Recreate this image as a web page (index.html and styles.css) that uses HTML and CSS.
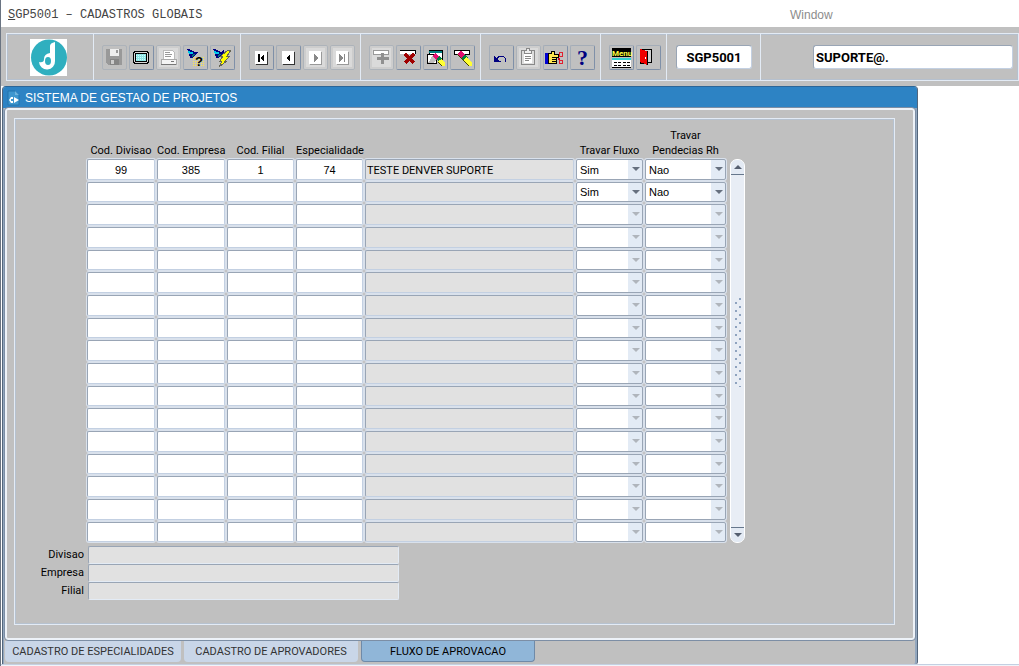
FILE: index.html
```html
<!DOCTYPE html>
<html lang="pt-BR">
<head>
    <meta charset="UTF-8">
    <title>SGP5001 - Cadastros Globais</title>
    <link rel="stylesheet" href="styles.css">
</head>
<body>
    <nav class="menubar">
        <a class="menu-main" href="#"><u>S</u>GP5001 – CADASTROS GLOBAIS</a>
        <a class="menu-window" href="#">Window</a>
    </nav>

    <div class="toolbar-area">
        <div class="toolbar">
            <div class="tool-logo">
                <svg width="37" height="37" viewBox="0 0 37 37">
                    <rect width="37" height="37" fill="#fff"/>
                    <circle cx="19" cy="18.500" r="18" fill="#2fafbf"/>
                    <path d="M20 7Q20 4 25 3V22A8 8 0 0 1 9 23Q14 24 14 20Q14 15 20 14Z" fill="#fff"/>
                    <ellipse cx="18" cy="22" rx="3" ry="4" fill="#2fafbf"/>
                </svg>
            </div>

            <!-- arquivo -->
            <div class="tool-group">
                <button class="tool-btn" disabled aria-label="Salvar">
                    <svg viewBox="0 0 23 23"><path d="M3 3H19V19H5L3 17Z" fill="#999"/><path d="M7 3H16V10H7Z" fill="#eee"/><path d="M13 4H15V7H13Z" fill="#999"/><path d="M7 13H16V19H7Z" fill="#858585"/><path d="M8 14H11V18H8Z" fill="#ccc"/></svg>
                </button>
                <button class="tool-btn" aria-label="Tela">
                    <svg viewBox="0 0 23 23"><path d="M4 5H18V6H19V17H18V18H4V17H3V6H4Z" fill="#000"/><path d="M5 6H17V7H18V16H17V17H5V16H4V7H5Z" fill="#d8d8d8"/><path d="M5 7H17V16H5Z" fill="#000"/><path d="M6 8H16V15H6Z" fill="#8fe5e5"/><path d="M6 9.500H16M6 11.500H16M6 13.500H16" stroke="#c9ffff" stroke-dasharray="1 1"/></svg>
                </button>
                <button class="tool-btn off" disabled aria-label="Imprimir">
                    <svg viewBox="0 0 23 23"><path d="M6 4H15L17 6V13H6Z" fill="#fff" stroke="#bbb"/><path d="M8 6.500H13M8 8.500H15M8 10.500H14" stroke="#999"/><path d="M4 13H19V18H4Z" fill="#f4f4f4" stroke="#aaa"/><path d="M4 18.500H19M14 15.500H17" stroke="#777"/></svg>
                </button>
                <button class="tool-btn" aria-label="Consultar">
                    <svg viewBox="0 0 23 23"><path d="M9 11.500H21M9 13.500H21M9 15.500H21M9 17.500H21M9 19.500H21" stroke="#ffe94a" stroke-dasharray="1 1"/><path d="M3 3H5L11 6H14V7L8 12H6L5 8Z" fill="#000080"/><path d="M4 5L8 6L10 7L7 8H5Z" fill="#00c8e8"/><path d="M9 8H12L8 11Z" fill="#007878"/><text x="11" y="20" class="icon-query">?</text></svg>
                </button>
                <button class="tool-btn" aria-label="Executar consulta">
                    <svg viewBox="0 0 23 23"><path d="M2 3H4L10 6L13 3V6L7 12H5L4 8Z" fill="#000080"/><path d="M3 5L7 6L9 7L6 8H4Z" fill="#00c8e8"/><path d="M8 8H11L7 11Z" fill="#007878"/><path d="M17 4H20L16 10H19L14 15H16L8 21L11 15H9L12 10H10Z" fill="#ffff00" stroke="#665" stroke-width="1"/></svg>
                </button>
            </div>

            <!-- navegação -->
            <div class="tool-group">
                <button class="tool-btn" aria-label="Primeiro">
                    <svg viewBox="0 0 23 23"><path d="M6 6H18V19H6Z" fill="#333"/><path d="M5 5H17V18H5Z" fill="#fff"/><path d="M8 8H10V16H8ZM14 8V16L10 12Z" fill="#000"/></svg>
                </button>
                <button class="tool-btn" aria-label="Anterior">
                    <svg viewBox="0 0 23 23"><path d="M6 6H18V19H6Z" fill="#333"/><path d="M5 5H17V18H5Z" fill="#fff"/><path d="M13 8V16L9 12Z" fill="#000"/></svg>
                </button>
                <button class="tool-btn off" disabled aria-label="Próximo">
                    <svg viewBox="0 0 23 23"><path d="M6 6H18V19H6Z" fill="#999"/><path d="M5 5H17V18H5Z" fill="#fff"/><path d="M10 8V16L14 12Z" fill="#888"/></svg>
                </button>
                <button class="tool-btn off" disabled aria-label="Último">
                    <svg viewBox="0 0 23 23"><path d="M6 6H18V19H6Z" fill="#999"/><path d="M5 5H17V18H5Z" fill="#fff"/><path d="M8 8V16L12 12ZM13 8H14V16H13Z" fill="#888"/></svg>
                </button>
            </div>

            <!-- registros -->
            <div class="tool-group">
                <button class="tool-btn off" disabled aria-label="Inserir">
                    <svg viewBox="0 0 23 23"><path d="M3.500 4.500H18.500V8.500H3.500Z" fill="#fff" stroke="#999"/><path d="M11 7H14V11H19V14H14V18H11V14H7V11H11Z" fill="#909090"/></svg>
                </button>
                <button class="tool-btn" aria-label="Excluir">
                    <svg viewBox="0 0 23 23"><path d="M3 4H19V8H3Z" fill="#fff"/><path d="M3 4.500H18.500V8" fill="none" stroke="#000"/><path d="M8 8L17 17M17 8L8 17" stroke="#a00000" stroke-width="3"/></svg>
                </button>
                <button class="tool-btn" aria-label="Limpar bloco">
                    <svg viewBox="0 0 23 23"><path d="M5 4.500H18.500V13.500H5Z" fill="#fff" stroke="#000"/><path d="M5 6H18" stroke="#008080" stroke-width="2"/><path d="M3.500 8.500H12.500V17.500H3.500Z" fill="#fff" stroke="#000"/><path d="M4 17L9 9L12 14L9 17Z" fill="#c0c0c0"/><path d="M8 10L12 7L15 11L12 14Z" fill="#e01070"/><path d="M12 13L15 10L18 13L15 16Z" fill="#008040"/><path d="M14 15L18 13L21 17V20H18Z" fill="#ff3"/><path d="M14 16L18 20" stroke="#440"/></svg>
                </button>
                <button class="tool-btn" aria-label="Limpar registro">
                    <svg viewBox="0 0 23 23"><path d="M3.500 4.500H18.500V8.500H3.500Z" fill="#fff" stroke="#000"/><path d="M6 8L10 5L14 9L11 12Z" fill="#e01070"/><path d="M10 12L14 8L17 12L13 15Z" fill="#008040"/><path d="M12 14L16 11L21 17V20H18Z" fill="#ff3"/><path d="M6 8L18 20" stroke="#440"/></svg>
                </button>
            </div>

            <!-- edição -->
            <div class="tool-group">
                <button class="tool-btn" aria-label="Desfazer">
                    <svg viewBox="0 0 23 23"><path d="M4 9V16H11V15H9L7 13L9 11H13L15 13V16H16V12L13 10H9L6 12Z" fill="#000080"/></svg>
                </button>
                <button class="tool-btn off" disabled aria-label="Lista de valores">
                    <svg viewBox="0 0 23 23"><path d="M4.500 4.500H17.500V18.500H4.500Z" fill="#ddd" stroke="#888"/><path d="M7 7H15V17H7Z" fill="#fff"/><path d="M7.500 6V4.500H9.500V2.500H12.500V4.500H14.500V7.500H7.500Z" fill="#eee" stroke="#888"/><path d="M8 10.500H14M8 12.500H14M8 14.500H12" stroke="#888"/></svg>
                </button>
                <button class="tool-btn" aria-label="Editar">
                    <svg viewBox="0 0 23 23"><path d="M1 7H4V18H1Z" fill="#0000d0"/><path d="M4.500 7.500H7L8 5.500H10.500V8.500H14.500V11.500H12.500V17.500H5L4.500 16Z" fill="#ffe650" stroke="#000"/><path d="M8 11.500H12M8 13.500H12M8 15.500H12" stroke="#000"/><path d="M14 12.500H16" stroke="#d00020" stroke-width="2"/><path d="M15.500 6.500H18.500V10.500H15.500ZM15.500 14.500H18.500V17.500H15.500Z" fill="none" stroke="#e02030"/></svg>
                </button>
                <button class="tool-btn" aria-label="Ajuda">
                    <svg viewBox="0 0 23 23"><text x="6" y="19" class="icon-help">?</text></svg>
                </button>
            </div>

            <!-- menu / sair -->
            <div class="tool-group">
                <button class="tool-btn" aria-label="Menu">
                    <svg viewBox="0 0 23 23"><path d="M2 2H21V11H2Z" fill="#000"/><text x="2" y="10" class="icon-menu">Menu</text><path d="M2 12H21V21H2Z" fill="#fff"/><path d="M2 12H21V14H2Z" fill="#30d0d0"/><path d="M4 16.500H11M4 19.500H11M13 16.500H20M13 19.500H20" stroke="#000" stroke-dasharray="3 1"/><path d="M2 21.500H21" stroke="#000"/></svg>
                </button>
                <button class="tool-btn" aria-label="Sair">
                    <svg viewBox="0 0 23 23"><path d="M3.500 3.500H14.500V16.500H3.500Z" fill="#d0d0d0" stroke="#000"/><path d="M3 3L10 5V19L3 16Z" fill="#f00000"/><path d="M10.500 5V19M3 17.500H7" stroke="#000"/><path d="M8 11H9V13H8Z" fill="#fff"/></svg>
                </button>
            </div>

            <div class="tool-field">
                <input class="program-code" type="text" value="SGP5001" aria-label="Programa">
            </div>
            <div class="tool-field tool-user">
                <input class="user-name" type="text" value="SUPORTE@." aria-label="Usuário">
            </div>
        </div>
    </div>

    <main class="window">
        <header class="titlebar">
            <svg width="13" height="16" viewBox="0 0 13 16"><path d="M1 1H8L12 5V15H1Z" fill="#3f97cf" stroke="#2574ad"/><path d="M8 1V5H12Z" fill="#6fb4de"/><path d="M6 7H4L2 10L4 13H6V11H4V9H6ZM7 7L12 10L7 13Z" fill="#fff"/></svg>
            <h1>SISTEMA DE GESTAO DE PROJETOS</h1>
        </header>

        <div class="frame">
            <section class="panel">
                <div class="grid-area">
                    <table class="grid">
                        <colgroup>
                            <col class="col-code"><col class="col-code"><col class="col-short"><col class="col-short">
                            <col class="col-desc"><col class="col-short"><col class="col-rh">
                        </colgroup>
                        <thead>
                            <tr>
                                <th>Cod. Divisao</th>
                                <th>Cod. Empresa</th>
                                <th>Cod. Filial</th>
                                <th>Especialidade</th>
                                <th></th>
                                <th>Travar Fluxo</th>
                                <th>Travar<br>Pendecias Rh</th>
                            </tr>
                        </thead>
                        <tbody id="linhas"></tbody>
                    </table>
                    <div class="scrollbar">
                        <button class="scroll-btn scroll-up" aria-label="Subir"></button>
                        <div class="scroll-track"><span class="scroll-grip"></span></div>
                        <button class="scroll-btn scroll-down" aria-label="Descer"></button>
                    </div>
                </div>

                <div class="details">
                    <label for="divisao">Divisao</label>
                    <input id="divisao" type="text" readonly>
                    <label for="empresa">Empresa</label>
                    <input id="empresa" type="text" readonly>
                    <label for="filial">Filial</label>
                    <input id="filial" type="text" readonly>
                </div>
            </section>
        </div>

        <div class="tabs">
            <button class="tab tab-wide">CADASTRO DE ESPECIALIDADES</button>
            <button class="tab">CADASTRO DE APROVADORES</button>
            <button class="tab active">FLUXO DE APROVACAO</button>
        </div>
    </main>
    <div class="statusbar"></div>

    <template id="linha">
        <tr>
            <td><input class="code" type="text" aria-label="Cod. Divisao"></td>
            <td><input class="code" type="text" aria-label="Cod. Empresa"></td>
            <td><input class="code" type="text" aria-label="Cod. Filial"></td>
            <td><input class="code" type="text" aria-label="Especialidade"></td>
            <td><input class="desc" type="text" aria-label="Descricao" readonly></td>
            <td><div class="combo"><select aria-label="Travar Fluxo"><option></option><option>Sim</option><option>Nao</option></select></div></td>
            <td><div class="combo"><select aria-label="Travar Pendecias Rh"><option></option><option>Sim</option><option>Nao</option></select></div></td>
        </tr>
    </template>

    <script>
        const TOTAL_LINHAS = 17;
        const dados = [
            ['99', '385', '1', '74', 'TESTE DENVER SUPORTE', 'Sim', 'Nao'],
            ['', '', '', '', '', 'Sim', 'Nao']
        ];
        const corpo = document.getElementById('linhas');
        const modelo = document.getElementById('linha');

        for (let i = 0; i < TOTAL_LINHAS; i++) {
            const linha = modelo.content.cloneNode(true);
            linha.querySelectorAll('input, select').forEach((campo, c) => {
                if (dados[i]) {
                    campo.value = dados[i][c];
                } else if (campo.tagName === 'SELECT') {
                    campo.disabled = true;
                }
            });
            corpo.appendChild(linha);
        }
    </script>
</body>
</html>
```
FILE: styles.css
```css
:root {
    --gray: #c0c0c0;
    --light: #e3ebf5;
    --line: #99a5b5;
    --soft: #c3d0e2;
    --blue: #2d83c4;
    --field: #e1e1e1;
}

* {
    box-sizing: border-box;
}

body {
    margin: 0;
    background: #fff;
    font-family: "Liberation Sans", Arial, sans-serif;
    font-size: 11px;
    color: #000;
    border-left: 1px solid #6a7482;
}

input, select, button {
    font: inherit;
    color: inherit;
    margin: 0;
}

/* menu */
.menubar {
    display: flex;
    height: 27px;
    padding: 4px 0 0 7px;
    line-height: 23px;
}

.menubar a {
    text-decoration: none;
}

.menu-main {
    width: 782px;
    font-family: "Liberation Mono", "Courier New", monospace;
    font-size: 12px;
    color: #444;
}

.menu-window {
    font-size: 12px;
    color: #8c8c8c;
}

/* toolbar */
.toolbar-area {
    background: var(--gray);
    padding: 6px 0 5px 5px;
}

.toolbar {
    display: flex;
    height: 48px;
    border: 1px solid var(--light);
    box-shadow: inset 0 0 0 1px #b5c0ce;
}

.tool-logo {
    width: 86px;
    padding-right: 3px;
    display: flex;
    align-items: center;
    justify-content: center;
}

.tool-group,
.tool-field {
    display: flex;
    align-items: center;
    gap: 2px;
    border-left: 1px solid var(--light);
    padding: 0 5px 0 8px;
}

.tool-field {
    padding: 0 8px 0 9px;
}

.tool-btn {
    width: 25px;
    height: 25px;
    padding: 0;
    background: var(--gray);
    border: 1px solid #a4adb8;
    border-right-color: #7f90a8;
    border-bottom-color: #7f90a8;
    border-radius: 2px;
}

.tool-btn:disabled {
    border-color: #adb3ba;
}

.tool-btn.off {
    background: #dadada;
    box-shadow: inset 0 0 0 2px #cdcdcd;
}

.tool-btn svg {
    display: block;
    width: 23px;
    height: 23px;
    shape-rendering: crispEdges;
}

.icon-query {
    font-size: 13px;
    font-weight: bold;
}

.icon-help {
    font-family: "Liberation Serif", serif;
    font-size: 22px;
    font-weight: bold;
    fill: #000080;
}

.icon-menu {
    font-family: Roboto, sans-serif;
    font-size: 8px;
    font-weight: bold;
    fill: #ffff40;
}

.program-code,
.user-name {
    height: 24px;
    background: #fff;
    border: 1px solid var(--line);
    border-right-color: var(--soft);
    border-bottom-color: var(--soft);
    border-radius: 3px;
    font-family: Roboto, "Liberation Sans", sans-serif;
    font-size: 13px;
    font-weight: bold;
}

.program-code {
    width: 76px;
    padding: 0;
    text-align: center;
}

.tool-user {
    flex: 1;
    justify-content: flex-end;
    padding-right: 5px;
}

.user-name {
    width: 200px;
    padding: 0 2px;
}

/* janela */
.window {
    max-width: 916px;
    margin-left: 1px;
    background: var(--gray);
    border: 1px solid #53667c;
    border-top-color: #2b6698;
    border-bottom: 0;
    border-radius: 4px 4px 2px 0;
    box-shadow: inset -2px 0 0 #93a7be, inset 1px 0 0 #93a7be;
}

.titlebar {
    display: flex;
    align-items: center;
    gap: 5px;
    height: 21px;
    padding-left: 4px;
    background: var(--blue);
    border-radius: 3px 3px 0 0;
}

.titlebar h1 {
    margin: 0;
    font-size: 12px;
    font-weight: normal;
    color: #fff;
}

.frame {
    margin: 0 2px;
    padding: 8px 18px 13px 7px;
    border: 2px solid #edf2f8;
    border-radius: 3px;
    outline: 1px solid #7c8ea5;
}

.panel {
    border: 1px solid var(--light);
    box-shadow: inset 0 0 0 1px #b6c2d0;
    padding: 8px 0 24px;
}

/* grade */
.grid-area {
    display: flex;
    padding-left: 72px;
}

.grid {
    width: 641px;
    table-layout: fixed;
    border-collapse: collapse;
}

.col-code { width: 70px; }
.col-short { width: 69px; }
.col-desc { width: 211px; }
.col-rh { width: 83px; }

.grid th {
    height: 31px;
    padding: 0 2px 0 0;
    vertical-align: bottom;
    font-family: Roboto, "Liberation Sans", sans-serif;
    font-weight: normal;
    line-height: 15px;
    white-space: nowrap;
}

.grid td {
    height: 23px;
    padding: 1px 2px 1px 0;
}

.grid input,
.grid select {
    display: block;
    width: 100%;
    height: 21px;
    background: #fff;
    border: 1px solid var(--line);
    border-right-color: var(--soft);
    border-bottom-color: var(--soft);
    border-radius: 2px;
    box-shadow: 0 0 0 1px #d9e1ec;
    padding: 0 2px;
}

.grid tr:nth-child(3n+2) td {
    height: 22px;
}

.grid tr:nth-child(3n+2) input,
.grid tr:nth-child(3n+2) select {
    height: 20px;
}

.grid .code {
    text-align: center;
}

.grid .desc {
    background: var(--field);
    padding: 1px 1px 0;
    font-family: Roboto, "Liberation Sans", sans-serif;
}

.combo {
    position: relative;
}

.grid select {
    appearance: none;
    border-color: var(--line);
    padding: 0 3px;
    background: linear-gradient(var(--light), var(--light)) right / 14px 100% no-repeat #fff;
    opacity: 1;
}

.combo::after {
    content: "";
    position: absolute;
    right: 3px;
    top: 8px;
    border: 4px solid transparent;
    border-top: 4px solid #66707f;
    border-bottom: 0;
    pointer-events: none;
}

.combo:has(select:disabled)::after {
    border-top-color: #b0b5bc;
}

/* barra de rolagem */
.scrollbar {
    display: flex;
    flex-direction: column;
    width: 15px;
    margin: 32px 0 0 2px;
    background: #e8edf5;
    border: 1px solid #fff;
    border-radius: 7px;
    overflow: hidden;
}

.scroll-btn {
    height: 15px;
    padding: 0;
    display: flex;
    align-items: center;
    justify-content: center;
    background: #e3eaf4;
    border: 0;
}

.scroll-up {
    border-bottom: 1px solid #66778c;
}

.scroll-down {
    border-top: 1px solid #66778c;
}

.scroll-btn::before {
    content: "";
    border: 4px solid transparent;
}

.scroll-up::before {
    border-top: 0;
    border-bottom: 4px solid #555f70;
}

.scroll-down::before {
    border-bottom: 0;
    border-top: 4px solid #555f70;
}

.scroll-track {
    flex: 1;
    display: flex;
    justify-content: center;
    padding-top: 122px;
}

.scroll-grip {
    width: 8px;
    height: 90px;
    background:
        radial-gradient(circle at 6px 2px, #8fa3bf 1px, transparent 1px),
        radial-gradient(circle at 2px 6px, #8fa3bf 1px, transparent 1px);
    background-size: 8px 8px;
}

/* detalhes */
.details {
    display: grid;
    grid-template-columns: 69px 311px;
    column-gap: 4px;
    padding-top: 3px;
}

.details label {
    text-align: right;
    font-family: Roboto, "Liberation Sans", sans-serif;
    line-height: 17px;
}

.details input {
    height: 18px;
    padding: 0 2px;
    background: var(--field);
    border: 1px solid var(--line);
    border-right-color: var(--light);
    border-bottom-color: var(--light);
    border-radius: 2px;
}

/* abas */
.tabs {
    display: flex;
    gap: 3px;
    padding: 1px 0 2px 2px;
}

.tab {
    width: 174px;
    height: 21px;
    padding: 0;
    background: #c9d6e8;
    border: 0;
    border-radius: 0 0 4px 4px;
    font-family: Roboto, "Liberation Sans", sans-serif;
    color: #333;
    white-space: nowrap;
}

.tab-wide {
    width: 176px;
}

.tab.active {
    background: #90b6d8;
    border: 1px solid #6f8aa8;
    border-top: 0;
    color: #000;
}

.statusbar {
    height: 2px;
    border-top: 1px solid var(--soft);
    background: #f0f4f9;
}
```
